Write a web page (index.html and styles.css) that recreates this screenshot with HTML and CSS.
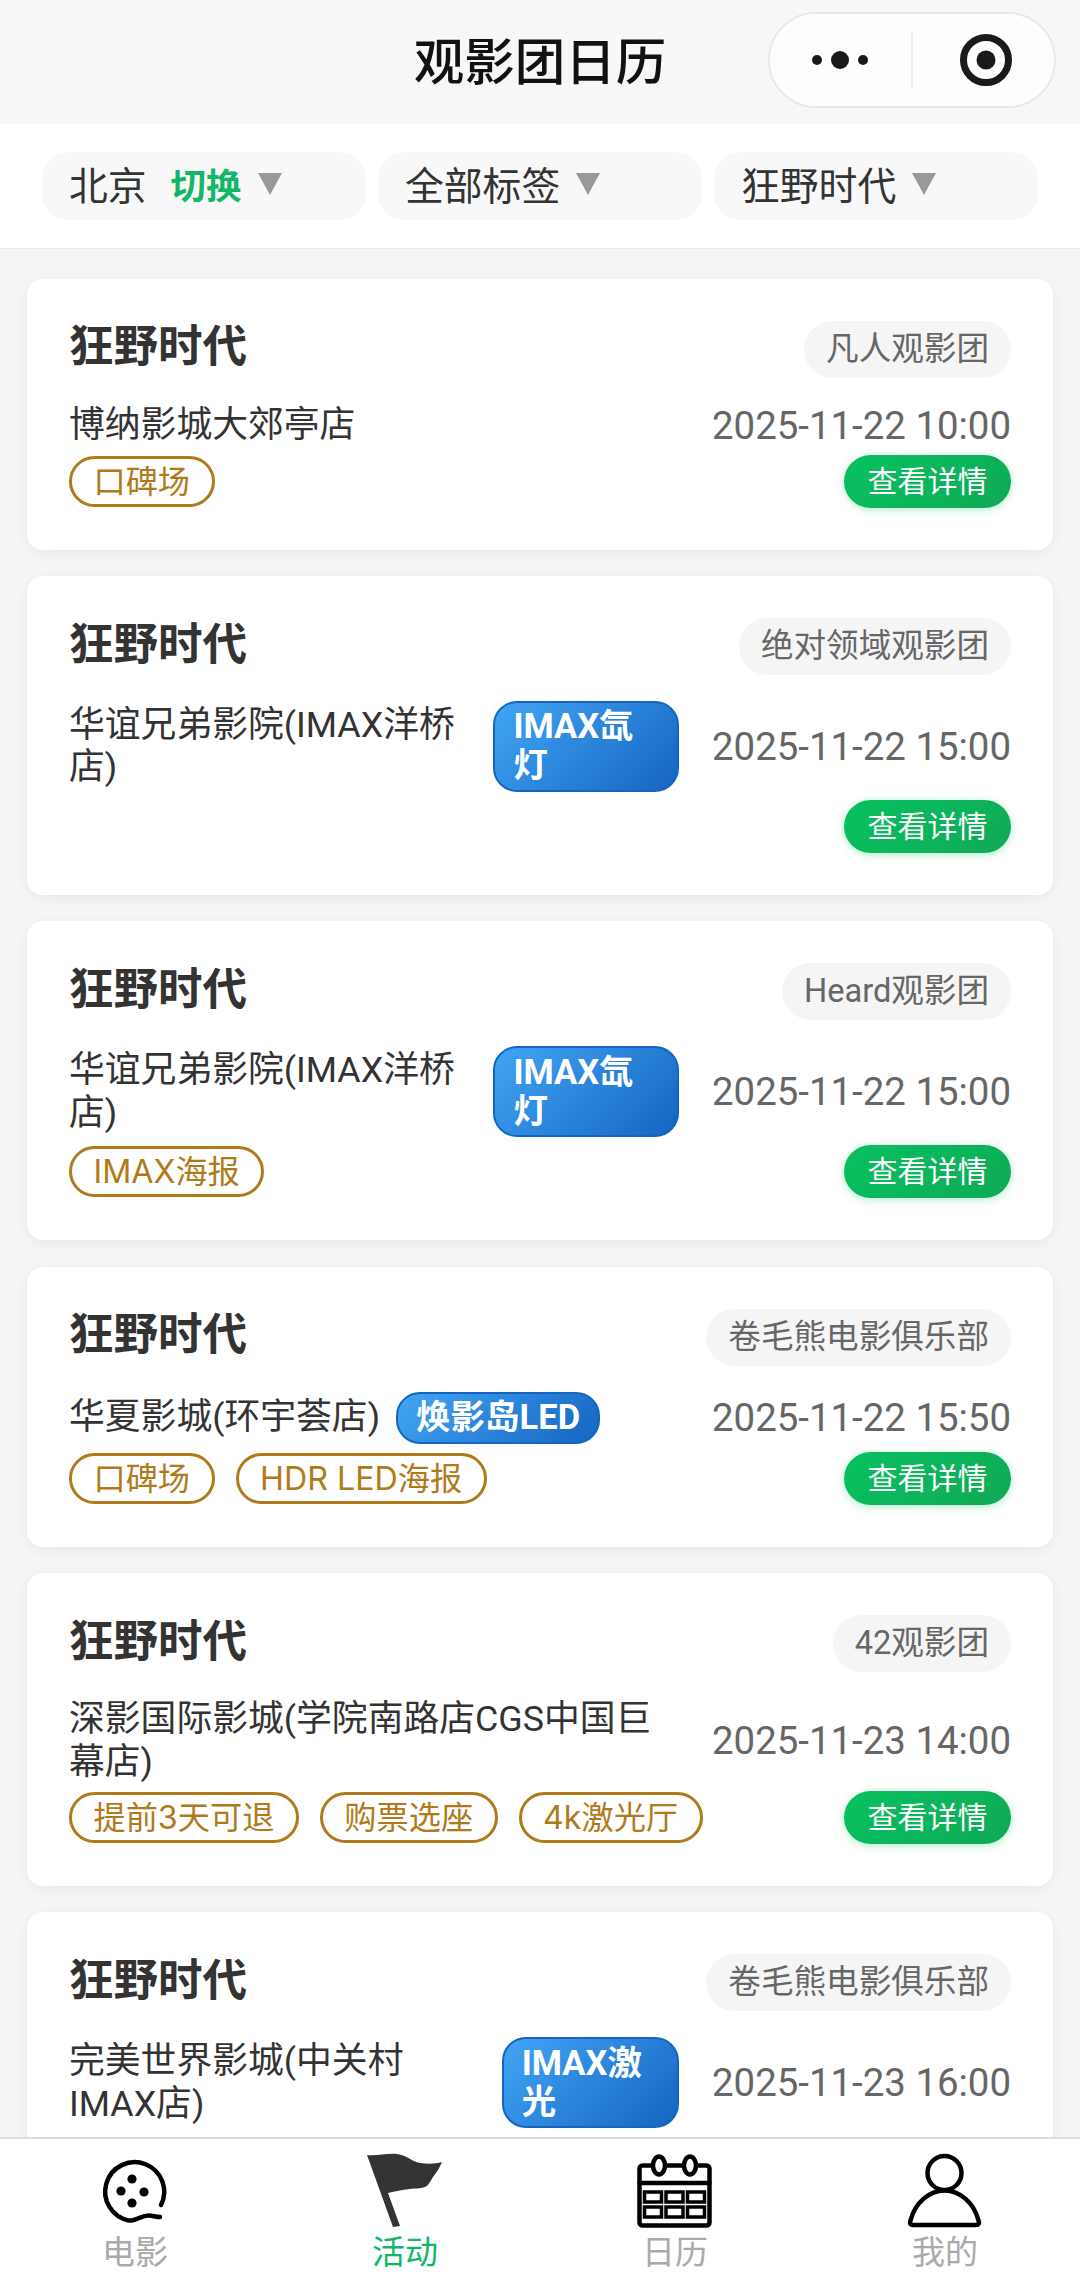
FILE: index.html
```html
<!DOCTYPE html>
<html lang="zh-CN">
<head>
<meta charset="utf-8">
<title>观影团日历</title>
<link rel="stylesheet" href="styles.css">
</head>
<body>
<div class="page">
  <header class="nav">
    <h1 class="nav-title">观影团日历</h1>
    <div class="capsule">
      <svg class="capsule-svg" width="288" height="96" viewBox="0 0 288 96">
        <circle cx="49" cy="48" r="5" class="ink"/><circle cx="72" cy="48" r="9" class="ink"/><circle cx="95" cy="48" r="5" class="ink"/>
        <line x1="144" y1="20" x2="144" y2="76" class="cap-div"/>
        <circle cx="218" cy="48" r="22.5" class="cap-ring"/><circle cx="218" cy="48" r="9.5" class="ink"/>
      </svg>
    </div>
  </header>

  <div class="filters">
    <div class="chip"><span class="chip-text">北京</span><span class="switch">切换</span><i class="arrow"></i></div>
    <div class="chip"><span class="chip-text">全部标签</span><i class="arrow"></i></div>
    <div class="chip"><span class="chip-text">狂野时代</span><i class="arrow"></i></div>
  </div>

  <main class="list">
    <article class="card">
      <div class="card-head"><h2 class="movie">狂野时代</h2><span class="group">凡人观影团</span></div>
      <div class="card-body">
        <div class="place"><span class="name">博纳影城大郊亭店</span></div>
        <time class="date">2025-11-22 10:00</time>
        <div class="tags"><span class="tag">口碑场</span></div>
        <a class="btn">查看详情</a>
      </div>
    </article>
    <article class="card">
      <div class="card-head"><h2 class="movie">狂野时代</h2><span class="group">绝对领域观影团</span></div>
      <div class="card-body">
        <div class="place"><span class="name">华谊兄弟影院(IMAX洋桥店)</span><span class="hall">IMAX氙灯</span></div>
        <time class="date">2025-11-22 15:00</time>
        <div class="tags"></div>
        <a class="btn">查看详情</a>
      </div>
    </article>
    <article class="card">
      <div class="card-head"><h2 class="movie">狂野时代</h2><span class="group">Heard观影团</span></div>
      <div class="card-body">
        <div class="place"><span class="name">华谊兄弟影院(IMAX洋桥店)</span><span class="hall">IMAX氙灯</span></div>
        <time class="date">2025-11-22 15:00</time>
        <div class="tags"><span class="tag">IMAX海报</span></div>
        <a class="btn">查看详情</a>
      </div>
    </article>
    <article class="card">
      <div class="card-head"><h2 class="movie">狂野时代</h2><span class="group">卷毛熊电影俱乐部</span></div>
      <div class="card-body">
        <div class="place"><span class="name">华夏影城(环宇荟店)</span><span class="hall">焕影岛LED</span></div>
        <time class="date">2025-11-22 15:50</time>
        <div class="tags"><span class="tag">口碑场</span><span class="tag">HDR LED海报</span></div>
        <a class="btn">查看详情</a>
      </div>
    </article>
    <article class="card">
      <div class="card-head"><h2 class="movie">狂野时代</h2><span class="group">42观影团</span></div>
      <div class="card-body">
        <div class="place"><span class="name">深影国际影城(学院南路店CGS中国巨幕店)</span></div>
        <time class="date">2025-11-23 14:00</time>
        <div class="tags"><span class="tag">提前3天可退</span><span class="tag">购票选座</span><span class="tag">4k激光厅</span></div>
        <a class="btn">查看详情</a>
      </div>
    </article>
    <article class="card">
      <div class="card-head"><h2 class="movie">狂野时代</h2><span class="group">卷毛熊电影俱乐部</span></div>
      <div class="card-body">
        <div class="place"><span class="name">完美世界影城(中关村IMAX店)</span><span class="hall">IMAX激光</span></div>
        <time class="date">2025-11-23 16:00</time>
      </div>
    </article>
  </main>

  <nav class="tabbar">
    <div class="tab">
      <svg class="tab-icon icon-film" viewBox="0 0 80 80">
        <path class="line" d="M68 53A29.5 29.5 0 1 0 36 68.6C44 68.6 49 63 56 63.4C60 63.6 63 65 67 65"/>
        <circle cx="39" cy="27" r="4.6"/><circle cx="28" cy="39" r="4.6"/><circle cx="51" cy="40" r="4.6"/><circle cx="39" cy="51" r="4.6"/>
      </svg>
      <span class="tab-label">电影</span>
    </div>
    <div class="tab tab-on">
      <svg class="tab-icon" viewBox="0 0 80 80">
        <path class="flag" d="M2 3C12 4 22 1 32 2C42 3 47 10 55 11C63 12 71 12 77 10C74 17 71 21 68 25C65 30 63 34 60 35C55 37 50 36 45 37C37 38 30 39 23 41L35 74L28 75Z"/>
      </svg>
      <span class="tab-label">活动</span>
    </div>
    <div class="tab">
      <svg class="tab-icon" viewBox="0 0 80 80">
        <rect class="line" x="4.5" y="13.5" width="70" height="60" rx="3"/>
        <line class="line" x1="4.5" y1="31" x2="74.5" y2="31"/>
        <ellipse class="line ring" cx="24" cy="13.5" rx="6" ry="9"/>
        <ellipse class="line ring" cx="55" cy="13.5" rx="6" ry="9"/>
        <g class="cells">
          <rect x="9.5" y="40" width="17" height="10"/><rect x="31" y="40" width="17" height="10"/><rect x="52.5" y="40" width="17" height="10"/>
          <rect x="9.5" y="55" width="17" height="10"/><rect x="31" y="55" width="17" height="10"/><rect x="52.5" y="55" width="17" height="10"/>
        </g>
      </svg>
      <span class="tab-label">日历</span>
    </div>
    <div class="tab">
      <svg class="tab-icon" viewBox="0 0 80 80">
        <circle class="line" cx="39.5" cy="21" r="17"/>
        <path class="line" d="M8 73H71Q75 73 73.5 68.5C69 51 55 38.5 39.5 38.5C24 38.5 10 51 5.5 68.5Q4 73 8 73Z"/>
      </svg>
      <span class="tab-label">我的</span>
    </div>
  </nav>
</div>
</body>
</html>
```
FILE: styles.css
```css
* { box-sizing: border-box; }
html, body { margin: 0; padding: 0; }
body { font-family: Roboto, "Noto Sans CJK SC", sans-serif; color: #333; background: #f5f5f5; }
.page { width: 1080px; height: 2289px; display: flex; flex-direction: column; overflow: hidden; }

.nav { position: relative; flex: none; height: 124px; background: #f7f7f7; display: flex; align-items: flex-start; justify-content: center; padding-top: 33px; }
.nav-title { margin: 0; font-size: 50.5px; font-weight: 500; line-height: 51px; color: #111; font-family: "Noto Sans CJK SC", sans-serif; }
.capsule { position: absolute; left: 768px; top: 12px; width: 288px; height: 96px; border: 2px solid #e8e8e8; border-radius: 48px; background: #fdfdfd; }
.capsule-svg { position: absolute; left: -2px; top: -2px; }
.ink { fill: #1a1a1a; }
.cap-div { stroke: #ececec; stroke-width: 2; }
.cap-ring { fill: none; stroke: #1a1a1a; stroke-width: 7; }

.filters { flex: none; height: 125px; background: #fff; border-bottom: 1px solid #e8e8e8; padding: 28px 42px 0; display: grid; grid-template-columns: repeat(3, 323.5px); column-gap: 12.5px; align-content: start; }
.chip { height: 68px; border-radius: 26px; background: #f8f8f8; padding-left: 27px; padding-bottom: 6px; display: flex; align-items: center; color: #333; font-family: "Noto Sans CJK SC", sans-serif; }
.chip-text { font-size: 38.8px; line-height: 50px; }
.switch { margin-left: 24px; font-size: 35.5px; font-weight: 700; color: #12b76a; }
.arrow { margin-left: 16px; margin-top: 2px; width: 0; height: 0; border-left: 12px solid transparent; border-right: 12px solid transparent; border-top: 22px solid #999; }

.list { flex: 1; min-height: 0; overflow: hidden; padding: 29.5px 27px 0; display: flex; flex-direction: column; row-gap: 26.4px; }
.card { flex: none; background: #fff; border-radius: 16px; padding: 42px; box-shadow: 0 3px 12px rgba(0,0,0,.06); }
.card-head { display: flex; justify-content: space-between; align-items: center; height: 57px; margin-bottom: 26px; }
.movie { margin: 0 0 11px; font-size: 44.5px; font-weight: 700; color: #333; line-height: 1; font-family: "Noto Sans CJK SC", sans-serif; }
.group { height: 57px; line-height: 57px; padding: 0 22px; border-radius: 29px; background: #f5f5f5; color: #666; font-size: 32.6px; }

.card-body { display: grid; grid-template-columns: 610px auto; justify-content: space-between; row-gap: 8px; align-items: center; }
.place { display: flex; align-items: center; column-gap: 16px; }
.name { font-size: 35.8px; line-height: 42.5px; color: #333; }
.hall { padding: 4.5px 18px; border: 2px solid #1565c0; border-radius: 24px; background: linear-gradient(135deg, #42a5f5, #1565c0); color: #fff; font-size: 34.5px; font-weight: 700; line-height: 39px; }
.date { font-size: 38.4px; line-height: 43px; color: #666; white-space: nowrap; text-align: right; }
.tags { display: flex; column-gap: 21px; white-space: nowrap; }
.tag { height: 51px; line-height: 45px; padding: 0 21.5px; border: 3px solid #b07a1a; border-radius: 26px; color: #b07a1a; font-size: 32.2px; font-family: Inter, "Noto Sans CJK SC", sans-serif; }
.btn { justify-self: end; height: 53px; line-height: 53px; width: 167px; text-align: center; border-radius: 27px; background: linear-gradient(135deg, #07c160, #10a957); box-shadow: 0 2px 8px rgba(7,193,96,.3); color: #fff; font-size: 30px; }

.tabbar { flex: none; height: 152px; background: #fff; border-top: 2px solid #ddd; display: grid; grid-template-columns: repeat(4, 1fr); position: relative; }
.tab { display: flex; flex-direction: column; align-items: center; padding-top: 13px; }
.tab-icon { width: 80px; height: 80px; display: block; fill: #000; }
.icon-film { margin-left: -5px; }
.tab-label { margin-top: -2px; font-size: 33px; line-height: 40px; color: #aaa; font-family: "Noto Sans CJK SC", sans-serif; }
.tab-on .tab-label { color: #12b76a; }
.line { fill: none; stroke: #000; stroke-width: 4.5; stroke-linecap: round; }
.ring { fill: #fff; }
.flag { fill: #333; }
.cells rect { fill: #fff; stroke: #000; stroke-width: 3.5; }
```
